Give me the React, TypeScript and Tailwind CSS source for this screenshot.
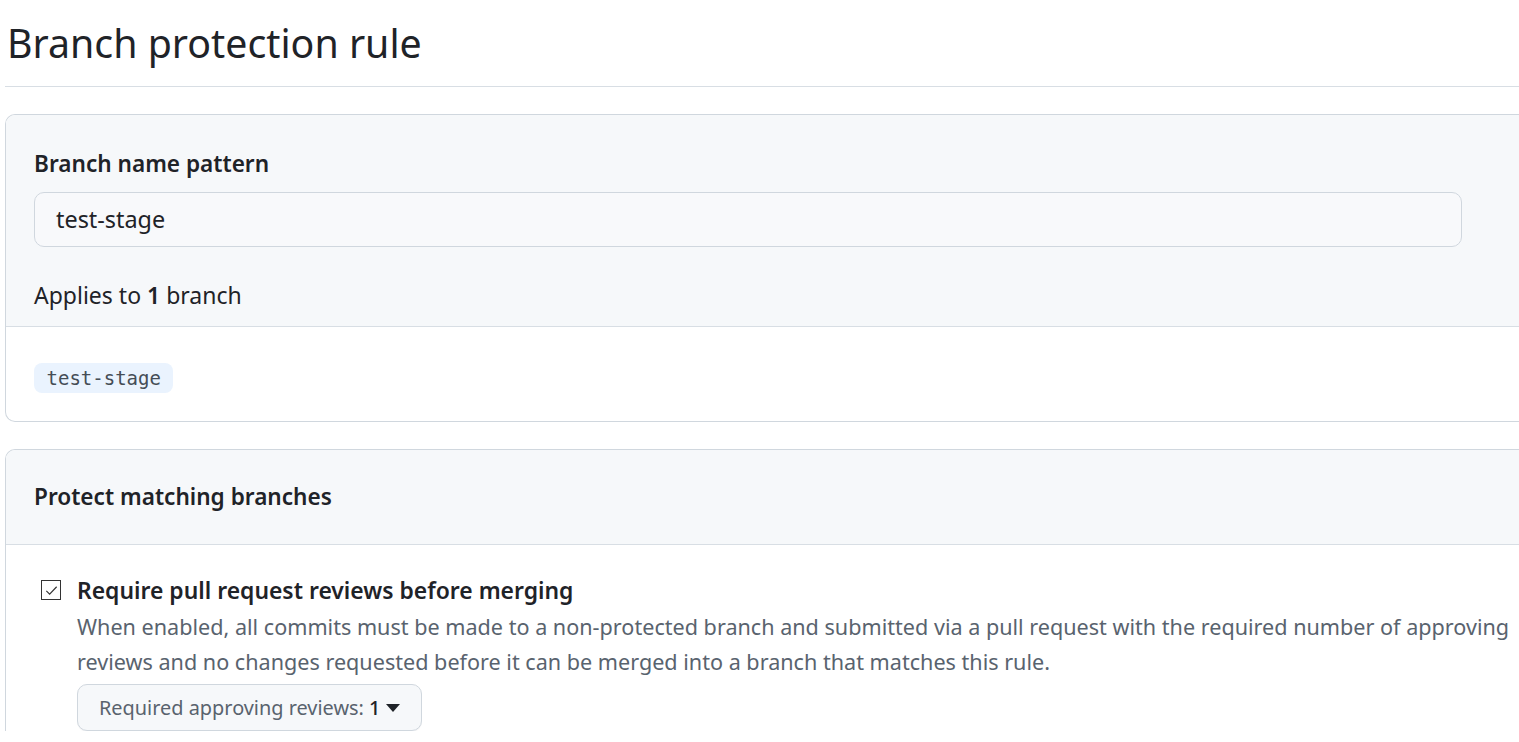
import React from 'react';

const sans = { fontFamily: '"Noto Sans", "Liberation Sans", sans-serif' };

function Checkbox() {
  return (
    <div className="mt-[7px] flex h-[20px] w-[20px] shrink-0 items-center justify-center border border-[#333] bg-white">
      <svg viewBox="0 0 16 16" className="h-[15px] w-[15px]" fill="none" stroke="#333" strokeWidth="1.2">
        <path d="M2.5 8.5 L6 12 L13.5 4" />
      </svg>
    </div>
  );
}

export default function App() {
  return (
    <div className="min-h-screen w-full overflow-hidden bg-white text-[#1f2328]" style={sans}>
      <div className="w-[1560px] pl-[5px]">
        <div className="border-b border-[#d8dee4] pb-[15px] pl-[2px] pt-[15px]">
          <h1 className="text-[39.3px] font-normal leading-[56px]">Branch protection rule</h1>
        </div>

        <section className="mt-[27px] overflow-hidden rounded-l-[10px] border border-r-0 border-[#d0d7de]">
          <div className="border-b border-[#d8dee4] bg-[#f6f8fa] px-[28px] pb-[13px] pt-[31px]">
            <label className="block text-[22.6px] font-semibold leading-[36px]">Branch name pattern</label>
            <div className="mt-[10px] flex h-[55px] w-[1428px] items-center rounded-[10px] border border-[#d0d7de] bg-[#f8f9fb] px-[21px] text-[23.4px]">
              test-stage
            </div>
            <p className="mt-[30px] text-[23px] leading-[36px]">
              Applies to <span className="font-semibold">1</span> branch
            </p>
          </div>
          <div className="px-[28px] pb-[28px] pt-[36px]">
            <code
              className="inline-block rounded-[8px] bg-[#eaf3fe] px-[12.5px] py-[2px] text-[19px] leading-[26px] text-[#454d56]"
              style={{ fontFamily: '"DejaVu Sans Mono", "Liberation Mono", monospace' }}
            >
              test-stage
            </code>
          </div>
        </section>

        <section className="mt-[27px] overflow-hidden rounded-tl-[10px] border border-b-0 border-r-0 border-[#d0d7de]">
          <div className="flex h-[95px] items-center border-b border-[#d8dee4] bg-[#f6f8fa] px-[28px]">
            <h2 className="text-[22.6px] font-semibold">Protect matching branches</h2>
          </div>
          <div className="flex gap-[16px] pl-[35px] pt-[28px]">
            <Checkbox />
            <div>
              <div className="text-[22.9px] font-semibold leading-[36px]">Require pull request reviews before merging</div>
              <p className="text-[21.6px] leading-[35px] text-[#59636e]">
                When enabled, all commits must be made to a non-protected branch and submitted via a pull request with the required number of approving
                <br />
                reviews and no changes requested before it can be merged into a branch that matches this rule.
              </p>
              <button className="mt-[5px] flex h-[47px] items-center gap-[6px] rounded-[10px] border border-[#d0d7de] bg-[#f6f8fa] px-[21px] text-[19.9px] text-[#59636e] shadow-[0_1px_0_rgba(31,35,40,0.04)]">
                <span>
                  Required approving reviews: <span className="font-medium text-[#1f2328]">1</span>
                </span>
                <svg viewBox="0 0 14 10" className="h-[10px] w-[14px]" fill="#1f2328">
                  <path d="M0 1h14L7 9z" />
                </svg>
              </button>
            </div>
          </div>
        </section>
      </div>
    </div>
  );
}
